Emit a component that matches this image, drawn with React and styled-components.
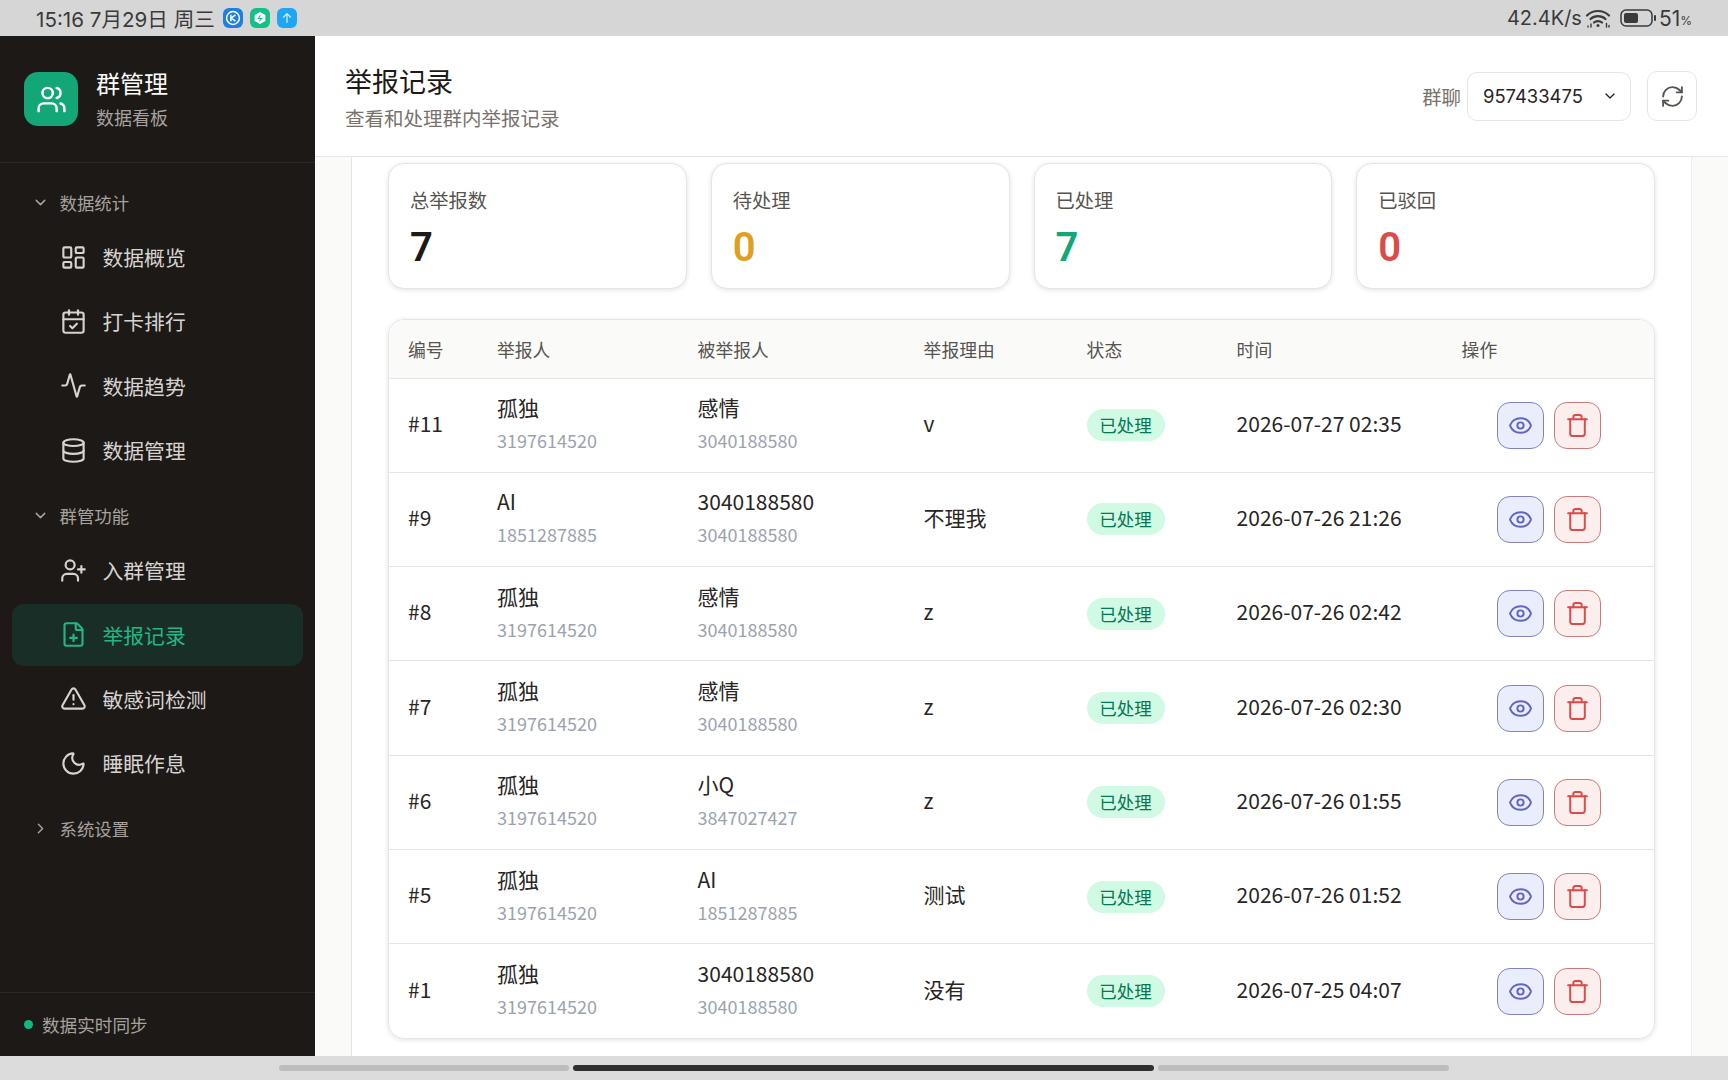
import { createGlobalStyle } from "styled-components";
import styled from "styled-components";
import {
  Activity,
  CalendarCheck,
  ChevronDown,
  ChevronRight,
  Database,
  Eye,
  FilePlus,
  LayoutDashboard,
  Moon,
  RefreshCw,
  Trash,
  TriangleAlert,
  UserPlus,
  Users,
} from "lucide-react";

const cjk = `"Noto Sans CJK SC", "Noto Sans", sans-serif`;
const latin = `Inter, "Noto Sans CJK SC", sans-serif`;

const GlobalStyle = createGlobalStyle`
  html, body {
    margin: 0;
    height: 100%;
    overflow: hidden;
    font-family: ${cjk};
    color: #1c1917;
  }
  * { box-sizing: border-box; }
`;

const Screen = styled.div`
  display: flex;
  flex-direction: column;
  width: 1728px;
  height: 1080px;
  overflow: hidden;
`;

const StatusBar = styled.div`
  display: flex;
  align-items: center;
  justify-content: space-between;
  flex: 0 0 36px;
  padding: 0 36px;
  background: #d6d6d6;
  color: #3a3a3a;
  font-family: ${latin};
  font-size: 20px;
`;

const StatusGroup = styled.div`
  display: flex;
  align-items: center;
  gap: ${(p) => p.$gap || 0}px;
`;

const StatusText = styled.span`
  margin: 0 ${(p) => p.$after || 0}px 0 ${(p) => p.$before || 0}px;
  font-size: ${(p) => p.$size || 20}px;
  white-space: nowrap;
`;

const Percent = styled.span`
  font-size: 12px;
  margin-top: 4px;
`;

const StatusGap = styled.span`
  width: 8px;
`;

const AppIcon = styled.span`
  display: flex;
  align-items: center;
  justify-content: center;
  width: 20px;
  height: 20px;
  border-radius: 6px;
  background: ${(p) => p.$bg};
`;

const Body = styled.div`
  display: flex;
  flex: 1;
  min-height: 0;
`;

const Sidebar = styled.aside`
  display: flex;
  flex-direction: column;
  flex: 0 0 315px;
  background: #1c1917;
`;

const Brand = styled.div`
  display: flex;
  align-items: center;
  gap: 18px;
  height: 127px;
  padding: 0 24px;
  border-bottom: 1px solid #2b2826;
`;

const Logo = styled.div`
  display: flex;
  align-items: center;
  justify-content: center;
  width: 54px;
  height: 54px;
  border-radius: 14px;
  background: #13a777;
  color: #fff;
`;

const BrandName = styled.div`
  color: #fafaf9;
  font-size: 24px;
  font-weight: 400;
  line-height: 34px;
  margin-top: -2px;
`;

const BrandSub = styled.div`
  color: #a8a29e;
  font-size: 18px;
  line-height: 26px;
  margin-top: 4px;
`;

const Nav = styled.nav`
  flex: 1;
  padding: 5px 12px 0;
`;

const SectionHead = styled.div`
  display: flex;
  align-items: center;
  gap: 10.5px;
  height: 48px;
  margin-top: 10px;
  padding-left: 20px;
  color: #a8a29e;
  font-size: 17.4px;
`;

const NavItem = styled.div`
  display: flex;
  align-items: center;
  gap: 15.5px;
  height: 62px;
  margin-bottom: 2.4px;
  padding-left: 48px;
  border-radius: 12px;
  font-size: 20.8px;
  color: ${(p) => (p.$active ? "#24b583" : "#d6d3d1")};
  background: ${(p) => (p.$active ? "#1a2e28" : "transparent")};
`;

const SidebarFoot = styled.div`
  display: flex;
  align-items: center;
  gap: 9px;
  height: 64px;
  padding-left: 24px;
  border-top: 1px solid #2b2826;
  color: #a8a29e;
  font-size: 17.6px;
`;

const Dot = styled.span`
  width: 9px;
  height: 9px;
  border-radius: 50%;
  background: #10b981;
`;

const Main = styled.main`
  display: flex;
  flex-direction: column;
  flex: 1;
  min-width: 0;
  background: #fafaf9;
`;

const Header = styled.header`
  display: flex;
  align-items: center;
  justify-content: space-between;
  flex: 0 0 121px;
  padding: 0 31px 0 30px;
  background: #fff;
  border-bottom: 1px solid #e7e5e4;
`;

const PageTitle = styled.h1`
  margin: 1px 0 0;
  font-size: 27px;
  font-weight: 400;
  line-height: 38px;
`;

const PageSub = styled.p`
  margin: 4px 0 0;
  color: #78716c;
  font-size: 19.5px;
  line-height: 28px;
`;

const HeaderTools = styled.div`
  display: flex;
  align-items: center;
`;

const ToolLabel = styled.span`
  color: #78716c;
  font-size: 19.4px;
  margin-right: 6px;
`;

const GroupSelect = styled.div`
  display: flex;
  align-items: center;
  justify-content: space-between;
  width: 164px;
  height: 49px;
  margin-right: 16px;
  padding: 0 12px 0 15px;
  border: 1px solid #e7e5e4;
  border-radius: 10px;
  font-family: ${latin};
  font-size: 18.4px;
  color: #292524;
`;

const RefreshButton = styled.button`
  display: flex;
  align-items: center;
  justify-content: center;
  width: 50px;
  height: 50px;
  padding: 0;
  background: #fff;
  border: 1px solid #e7e5e4;
  border-radius: 10px;
  color: #57534e;
`;

const Panel = styled.section`
  flex: 1;
  min-height: 0;
  margin: 0 36px;
  padding: 6px 36px 0;
  background: #fff;
  border-left: 1px solid #e7e5e4;
  border-right: 1px solid #eeedec;
`;

const StatGrid = styled.div`
  display: grid;
  grid-template-columns: repeat(4, 1fr);
  gap: 24px;
  margin-bottom: 30px;
`;

const StatCard = styled.div`
  height: 126px;
  padding: 22px 21px;
  border: 1px solid #e7e5e4;
  border-radius: 16px;
  background: #fff;
  box-shadow: 0 1px 5px rgba(28, 25, 23, 0.12);
`;

const StatLabel = styled.div`
  color: #57534e;
  font-size: 19.3px;
  line-height: 28px;
`;

const StatValue = styled.div`
  margin-top: 11px;
  font-family: Roboto, "Liberation Sans", sans-serif;
  font-size: 40px;
  font-weight: 600;
  line-height: 46px;
  color: ${(p) => p.$color};
`;

const TableCard = styled.div`
  overflow: hidden;
  border: 1px solid #e7e5e4;
  border-radius: 16px;
  box-shadow: 0 1px 5px rgba(28, 25, 23, 0.12);
`;

const Table = styled.table`
  width: 100%;
  border-collapse: collapse;
  table-layout: fixed;
`;

const HeadCell = styled.th`
  height: 58px;
  padding: 0 0 0 19px;
  background: #fafaf9;
  border-bottom: 1px solid #e7e5e4;
  color: #57534e;
  font-size: 17.8px;
  font-weight: 400;
  text-align: left;
`;

const Row = styled.tr`
  height: 94.3px;
  & + & td { border-top: 1px solid #e7e5e4; }
`;

const Cell = styled.td`
  padding: 0 0 5px 19px;
  font-size: 21px;
  color: #292524;
`;

const Who = styled.div`
  line-height: 30px;
`;

const Qq = styled.div`
  margin-top: 5px;
  color: #9ca3af;
  font-size: 18px;
  line-height: 26px;
`;

const Badge = styled.span`
  display: block;
  width: 78px;
  height: 32px;
  margin-bottom: -5px;
  border-radius: 16px;
  background: #d1fae5;
  color: #047857;
  font-size: 17.5px;
  line-height: 32px;
  text-align: center;
`;

const Actions = styled.div`
  display: flex;
  gap: 10px;
  padding-left: 35px;
  margin-bottom: -5px;
`;

const IconButton = styled.button`
  display: flex;
  align-items: center;
  justify-content: center;
  width: 47px;
  height: 47px;
  padding: 0;
  border-radius: 13px;
  border: 1px solid ${(p) => (p.$danger ? "#c97b7b" : "#7f84c0")};
  background: ${(p) => (p.$danger ? "#fdeeee" : "#eaedfb")};
  color: ${(p) => (p.$danger ? "#dc4a4a" : "#6366c1")};
`;

const BottomBar = styled.div`
  display: flex;
  justify-content: center;
  align-items: center;
  gap: 4px;
  flex: 0 0 24px;
  background: #dcdcdc;
`;

const Pill = styled.span`
  width: ${(p) => p.$w}px;
  height: 6px;
  border-radius: 3px;
  background: ${(p) => (p.$dark ? "#2f2f2f" : "#bdbdbd")};
`;

const columns = [
  ["编号", 89],
  ["举报人", 200.6],
  ["被举报人", 226],
  ["举报理由", 163],
  ["状态", 150],
  ["时间", 225],
  ["操作", 213],
];

const reports = [
  { id: "#11", who: "孤独", whoQq: "3197614520", target: "感情", targetQq: "3040188580", reason: "v", time: "2026-07-27 02:35" },
  { id: "#9", who: "AI", whoQq: "1851287885", target: "3040188580", targetQq: "3040188580", reason: "不理我", time: "2026-07-26 21:26" },
  { id: "#8", who: "孤独", whoQq: "3197614520", target: "感情", targetQq: "3040188580", reason: "z", time: "2026-07-26 02:42" },
  { id: "#7", who: "孤独", whoQq: "3197614520", target: "感情", targetQq: "3040188580", reason: "z", time: "2026-07-26 02:30" },
  { id: "#6", who: "孤独", whoQq: "3197614520", target: "小Q", targetQq: "3847027427", reason: "z", time: "2026-07-26 01:55" },
  { id: "#5", who: "孤独", whoQq: "3197614520", target: "AI", targetQq: "1851287885", reason: "测试", time: "2026-07-26 01:52" },
  { id: "#1", who: "孤独", whoQq: "3197614520", target: "3040188580", targetQq: "3040188580", reason: "没有", time: "2026-07-25 04:07" },
];

const stats = [
  ["总举报数", "7", "#1c1917"],
  ["待处理", "0", "#e09f1f"],
  ["已处理", "7", "#13a777"],
  ["已驳回", "0", "#dc4a4a"],
];

function WifiIcon() {
  return (
    <svg width="28" height="22" viewBox="0 0 26 22" fill="none" stroke="#3a3a3a" strokeWidth="2.2" strokeLinecap="round">
      <path d="M2 8.5C8 2.5 18 2.5 24 8.5" />
      <path d="M5.5 12C9.5 8.2 16.5 8.2 20.5 12" />
      <path d="M9 15.5C11.2 13.6 14.8 13.6 17 15.5" />
      <circle cx="13" cy="18.5" r="1.5" fill="#3a3a3a" stroke="none" />
      <path d="M3 19v1M6 17v3" strokeWidth="1.4" />
      <path d="M21.5 16.5v3.5M24 18.5v1.5" strokeWidth="1.4" />
    </svg>
  );
}

function BatteryIcon() {
  return (
    <svg width="37" height="18" viewBox="0 0 37 18">
      <rect x="1" y="1" width="31" height="16" rx="5" fill="none" stroke="#3a3a3a" strokeWidth="1.5" />
      <rect x="4" y="4" width="14" height="10" rx="2" fill="#3a3a3a" />
      <rect x="34" y="6" width="2" height="6" rx="1" fill="#3a3a3a" />
    </svg>
  );
}

function App() {
  return (
    <Screen>
      <GlobalStyle />
      <StatusBar>
        <StatusGroup $gap={7}>
          <StatusText $after={1} $size={20.6}>15:16 7月29日 周三</StatusText>
          <AppIcon $bg="#1f7fe0">
            <svg width="16" height="16" viewBox="0 0 15 15" fill="none" stroke="#fff" strokeWidth="1.4">
              <circle cx="7.5" cy="7.5" r="6" />
              <path d="M5.5 4.5v6M9.8 4.5L5.8 7.5l4 3" />
            </svg>
          </AppIcon>
          <AppIcon $bg="#14c08a">
            <svg width="14" height="14" viewBox="0 0 13 13">
              <path d="M6.5 1l5 2.8v5.4l-5 2.8-5-2.8V3.8z" fill="#fff" />
              <path d="M7 4L5 7h3l-2 2.5" fill="none" stroke="#14c08a" strokeWidth="1" />
            </svg>
          </AppIcon>
          <AppIcon $bg="#1ea5f5">
            <svg width="14" height="14" viewBox="0 0 13 13" fill="none" stroke="#d9f1ff" strokeWidth="1.1">
              <path d="M6.5 11V2.5M3 6l3.5-3.5L10 6" />
            </svg>
          </AppIcon>
        </StatusGroup>
        <StatusGroup>
          <StatusText $after={2}>42.4K/s</StatusText>
          <WifiIcon />
          <StatusGap />
          <BatteryIcon />
          <StatusText $before={2} $size={21}>51</StatusText>
          <Percent>%</Percent>
        </StatusGroup>
      </StatusBar>

      <Body>
        <Sidebar>
          <Brand>
            <Logo>
              <Users size={31} strokeWidth={1.9} />
            </Logo>
            <div>
              <BrandName>群管理</BrandName>
              <BrandSub>数据看板</BrandSub>
            </div>
          </Brand>
          <Nav>
            <SectionHead>
              <ChevronDown size={17} />
              数据统计
            </SectionHead>
            <NavItem>
              <LayoutDashboard size={27} strokeWidth={1.9} />
              数据概览
            </NavItem>
            <NavItem>
              <CalendarCheck size={27} strokeWidth={1.9} />
              打卡排行
            </NavItem>
            <NavItem>
              <Activity size={27} strokeWidth={1.9} />
              数据趋势
            </NavItem>
            <NavItem>
              <Database size={27} strokeWidth={1.9} />
              数据管理
            </NavItem>
            <SectionHead>
              <ChevronDown size={17} />
              群管功能
            </SectionHead>
            <NavItem>
              <UserPlus size={27} strokeWidth={1.9} />
              入群管理
            </NavItem>
            <NavItem $active>
              <FilePlus size={27} strokeWidth={1.9} />
              举报记录
            </NavItem>
            <NavItem>
              <TriangleAlert size={27} strokeWidth={1.9} />
              敏感词检测
            </NavItem>
            <NavItem>
              <Moon size={27} strokeWidth={1.9} />
              睡眠作息
            </NavItem>
            <SectionHead>
              <ChevronRight size={17} />
              系统设置
            </SectionHead>
          </Nav>
          <SidebarFoot>
            <Dot />
            数据实时同步
          </SidebarFoot>
        </Sidebar>

        <Main>
          <Header>
            <div>
              <PageTitle>举报记录</PageTitle>
              <PageSub>查看和处理群内举报记录</PageSub>
            </div>
            <HeaderTools>
              <ToolLabel>群聊</ToolLabel>
              <GroupSelect>
                957433475
                <ChevronDown size={16} />
              </GroupSelect>
              <RefreshButton>
                <RefreshCw size={25} strokeWidth={1.8} />
              </RefreshButton>
            </HeaderTools>
          </Header>
          <Panel>
            <StatGrid>
              {stats.map(([label, value, color]) => (
                <StatCard key={label}>
                  <StatLabel>{label}</StatLabel>
                  <StatValue $color={color}>{value}</StatValue>
                </StatCard>
              ))}
            </StatGrid>
            <TableCard>
              <Table>
                <colgroup>
                  {columns.map(([name, width]) => (
                    <col key={name} width={width} />
                  ))}
                </colgroup>
                <thead>
                  <tr>
                    {columns.map(([name]) => (
                      <HeadCell key={name}>{name}</HeadCell>
                    ))}
                  </tr>
                </thead>
                <tbody>
                  {reports.map((r) => (
                    <Row key={r.id}>
                      <Cell>{r.id}</Cell>
                      <Cell>
                        <Who>{r.who}</Who>
                        <Qq>{r.whoQq}</Qq>
                      </Cell>
                      <Cell>
                        <Who>{r.target}</Who>
                        <Qq>{r.targetQq}</Qq>
                      </Cell>
                      <Cell>{r.reason}</Cell>
                      <Cell>
                        <Badge>已处理</Badge>
                      </Cell>
                      <Cell>{r.time}</Cell>
                      <Cell>
                        <Actions>
                          <IconButton>
                            <Eye size={25} strokeWidth={1.9} />
                          </IconButton>
                          <IconButton $danger>
                            <Trash size={25} strokeWidth={1.9} />
                          </IconButton>
                        </Actions>
                      </Cell>
                    </Row>
                  ))}
                </tbody>
              </Table>
            </TableCard>
          </Panel>
        </Main>
      </Body>

      <BottomBar>
        <Pill $w={290} />
        <Pill $w={581} $dark />
        <Pill $w={291} />
      </BottomBar>
    </Screen>
  );
}

export default App;
